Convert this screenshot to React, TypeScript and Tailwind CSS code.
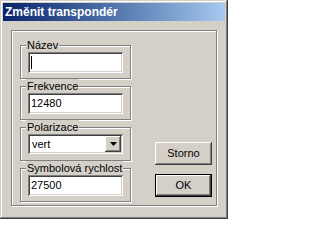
import React from "react";

const raised =
  "shadow-[inset_-1px_-1px_0_#404040,inset_1px_1px_0_#ffffff,inset_-2px_-2px_0_#808080,inset_2px_2px_0_#d4d0c8]";
const sunken =
  "shadow-[inset_1px_1px_0_#808080,inset_-1px_-1px_0_#ffffff,inset_2px_2px_0_#404040,inset_-2px_-2px_0_#d4d0c8]";
const etched =
  "border border-[#808080] shadow-[1px_1px_0_#ffffff,inset_1px_1px_0_#ffffff]";

function Group({ label, children }: { label: string; children: React.ReactNode }) {
  return (
    <div className={`${etched} w-[111px] h-[34px] flex flex-col px-[7px]`}>
      <div className="-mt-[8px] -ml-[2px] h-[14px] leading-[14px] bg-[#d4d0c8] w-fit whitespace-nowrap px-[1px] text-[11px] text-black">
        {label}
      </div>
      {children}
    </div>
  );
}

function Field({ value, caret }: { value?: string; caret?: boolean }) {
  return (
    <div className={`${sunken} bg-white h-[21px] w-[95px] flex items-center pl-[3px] text-[11px] text-black`}>
      {caret ? <span className="w-[1px] h-[13px] bg-black" /> : value}
    </div>
  );
}

export default function App() {
  return (
    <div className="w-[228px] h-[219px] bg-[#d4d0c8] p-[3px] flex flex-col font-['Liberation_Sans',Arial,sans-serif] shadow-[inset_-1px_-1px_0_#404040,inset_1px_1px_0_#d4d0c8,inset_-2px_-2px_0_#808080,inset_2px_2px_0_#ffffff]">
      <div className="h-[18px] shrink-0 bg-gradient-to-r from-[#0a246a] to-[#a6caf0] flex items-center pl-[2px] text-white font-bold text-[12px] leading-none">
        Změnit transpondér
      </div>
      <div className="flex-1 flex flex-col pl-[8px] pr-[8px] pt-[9px] pb-[10px]">
        <div className={`${etched} flex-1 flex items-end pl-[8px] pr-[4px] pb-[3px]`}>
          <div className="flex flex-col gap-[7px]">
            <Group label="Název">
              <Field caret />
            </Group>
            <Group label="Frekvence">
              <Field value="12480" />
            </Group>
            <Group label="Polarizace">
              <div className={`${sunken} bg-white h-[20px] w-[95px] flex items-center justify-between p-[2px] text-[11px] text-black`}>
                <span className="pl-[2px]">vert</span>
                <div className={`${raised} w-[16px] h-[16px] flex items-center justify-center bg-[#d4d0c8]`}>
                  <svg width="7" height="4" viewBox="0 0 7 4">
                    <path d="M0 0h7L3.5 4z" fill="#000" />
                  </svg>
                </div>
              </div>
            </Group>
            <Group label="Symbolová rychlost">
              <Field value="27500" />
            </Group>
          </div>
          <div className="ml-auto flex flex-col gap-[9px] mb-[5px]">
            <button className={`${raised} w-[57px] h-[23px] bg-[#d4d0c8] text-[11px] text-black`}>
              Storno
            </button>
            <div className="border border-black">
              <button className={`${raised} w-[55px] h-[21px] bg-[#d4d0c8] text-[11px] text-black flex items-center justify-center`}>
                OK
              </button>
            </div>
          </div>
        </div>
      </div>
    </div>
  );
}
